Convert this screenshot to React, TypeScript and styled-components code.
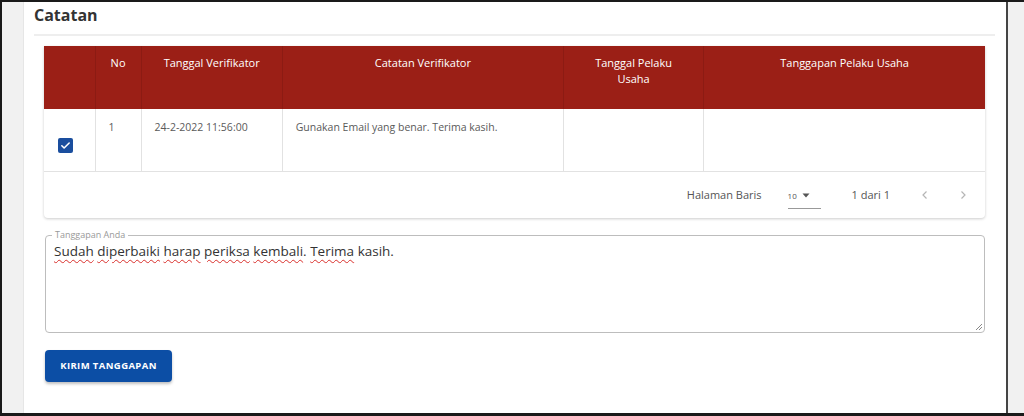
import React from 'react';
import styled, { createGlobalStyle } from 'styled-components';

const GlobalStyle = createGlobalStyle`
  html, body {
    margin: 0;
    padding: 0;
    background: #fff;
  }
  * {
    box-sizing: border-box;
  }
`;

const columns = [
  { key: 'check', label: '', width: 51 },
  { key: 'no', label: 'No', width: 46 },
  { key: 'tglVer', label: 'Tanggal Verifikator', width: 141 },
  { key: 'catVer', label: 'Catatan Verifikator', width: 281 },
  { key: 'tglPel', label: 'Tanggal Pelaku Usaha', width: 140, wrap: true },
  { key: 'tangPel', label: 'Tanggapan Pelaku Usaha', width: 281 },
];

const rows = [
  {
    no: '1',
    tglVer: '24-2-2022 11:56:00',
    catVer: 'Gunakan Email yang benar. Terima kasih.',
    tglPel: '',
    tangPel: '',
  },
];

const replyWords: { text: string; typo: boolean }[] = [
  { text: 'Sudah', typo: true },
  { text: ' ', typo: false },
  { text: 'diperbaiki', typo: true },
  { text: ' ', typo: false },
  { text: 'harap', typo: true },
  { text: ' ', typo: false },
  { text: 'periksa', typo: true },
  { text: ' ', typo: false },
  { text: 'kembali', typo: true },
  { text: '. ', typo: false },
  { text: 'Terima', typo: true },
  { text: ' kasih.', typo: false },
];

const App = () => {
  return (
    <>
      <GlobalStyle />
      <Frame>
        <Gutter />
        <Panel>
          <Title>Catatan</Title>
          <Divider />
          <TableCard>
            <Table>
              <colgroup>
                {columns.map((c) => (
                  <col key={c.key} style={{ width: c.width }} />
                ))}
              </colgroup>
              <thead>
                <tr>
                  {columns.map((c) => (
                    <Th key={c.key}>
                      <HeadLabel $wrap={c.wrap}>{c.label}</HeadLabel>
                    </Th>
                  ))}
                </tr>
              </thead>
              <tbody>
                {rows.map((r) => (
                  <tr key={r.no}>
                    <CheckCell>
                      <CheckBox>
                        <svg width="11" height="11" viewBox="0 0 24 24">
                          <path
                            d="M4 12.5l5 5L20 6.5"
                            fill="none"
                            stroke="#fff"
                            strokeWidth="3.4"
                            strokeLinecap="round"
                            strokeLinejoin="round"
                          />
                        </svg>
                      </CheckBox>
                    </CheckCell>
                    <Td>{r.no}</Td>
                    <Td>{r.tglVer}</Td>
                    <Td>{r.catVer}</Td>
                    <Td>{r.tglPel}</Td>
                    <Td>{r.tangPel}</Td>
                  </tr>
                ))}
              </tbody>
            </Table>
            <Pager>
              <PagerLabel>Halaman Baris</PagerLabel>
              <RowsSelect>
                <span>10</span>
                <svg width="10" height="10" viewBox="0 0 10 10">
                  <path d="M1.5 3.5h7L5 7.5z" fill="#555" />
                </svg>
              </RowsSelect>
              <PagerLabel>1 dari 1</PagerLabel>
              <PagerArrows>
                <Arrow>
                  <svg width="12" height="12" viewBox="0 0 12 12">
                    <path d="M7.5 2.5L4 6l3.5 3.5" fill="none" stroke="#b5b5b5" strokeWidth="1.2" />
                  </svg>
                </Arrow>
                <Arrow>
                  <svg width="12" height="12" viewBox="0 0 12 12">
                    <path d="M4.5 2.5L8 6 4.5 9.5" fill="none" stroke="#b5b5b5" strokeWidth="1.2" />
                  </svg>
                </Arrow>
              </PagerArrows>
            </Pager>
          </TableCard>

          <ReplyField>
            <Legend>Tanggapan Anda</Legend>
            <ReplyText>
              {replyWords.map((w, i) =>
                w.typo ? <Typo key={i}>{w.text}</Typo> : <span key={i}>{w.text}</span>
              )}
            </ReplyText>
            <Grip>
              <svg width="9" height="9" viewBox="0 0 9 9">
                <path d="M8 2L2 8M8 5L5 8" stroke="#888" strokeWidth="1" />
              </svg>
            </Grip>
          </ReplyField>

          <SubmitButton>KIRIM TANGGAPAN</SubmitButton>
        </Panel>
        <RightGutter />
      </Frame>
    </>
  );
};

export default App;

const Frame = styled.div`
  width: 1024px;
  height: 416px;
  display: flex;
  border-top: 2px solid #1a1a1a;
  border-left: 2px solid #1a1a1a;
  border-bottom: 3px solid #1a1a1a;
  font-family: 'Open Sans', 'Liberation Sans', sans-serif;
  overflow: hidden;
`;

const Gutter = styled.div`
  width: 22px;
  flex-shrink: 0;
  background: #f1f1f1;
  border-right: 1px solid #e6e6e6;
`;

const RightGutter = styled.div`
  width: 18px;
  flex-shrink: 0;
  background: #f1f1f1;
  border-left: 2px solid #444;
`;

const Panel = styled.div`
  flex: 1;
  background: #fff;
  padding: 3px 11px 0 10px;
  display: flex;
  flex-direction: column;
`;

const Title = styled.h2`
  margin: 0;
  font-size: 16px;
  line-height: 20px;
  font-weight: 700;
  color: #333;
`;

const Divider = styled.div`
  height: 2px;
  background: #eeeeee;
  margin-top: 9px;
`;

const TableCard = styled.div`
  margin: 10px 10px 0 10px;
  border-radius: 0 0 4px 4px;
  box-shadow: 0 1px 3px rgba(0, 0, 0, 0.2);
  background: #fff;
`;

const Table = styled.table`
  width: 100%;
  border-collapse: collapse;
  table-layout: fixed;
`;

const Th = styled.th`
  background: #9b1f16;
  color: #fff;
  font-size: 11px;
  font-weight: 400;
  line-height: 16px;
  height: 63px;
  padding: 9px 4px 0;
  vertical-align: top;
  text-align: center;
  border-left: 1px solid #8c1b13;

  &:first-child {
    border-left: none;
  }
`;

const HeadLabel = styled.span<{ $wrap?: boolean }>`
  display: inline-block;
  max-width: ${(p) => (p.$wrap ? '96px' : 'none')};
`;

const Td = styled.td`
  height: 62px;
  padding: 10px 13px 0;
  vertical-align: top;
  font-size: 10.5px;
  line-height: 16px;
  color: #5a5a5a;
  border-left: 1px solid #e2e2e2;
  border-bottom: 1px solid #e2e2e2;
`;

const CheckCell = styled.td`
  height: 62px;
  padding: 29px 0 0 14px;
  vertical-align: top;
  border-bottom: 1px solid #e2e2e2;
`;

const CheckBox = styled.span`
  display: flex;
  align-items: center;
  justify-content: center;
  width: 15px;
  height: 15px;
  border-radius: 2px;
  background: #1a4e9e;
`;

const Pager = styled.div`
  height: 46px;
  display: flex;
  align-items: center;
  justify-content: flex-end;
  padding-right: 16px;
`;

const PagerLabel = styled.span`
  font-size: 11px;
  color: #555;
`;

const RowsSelect = styled.div`
  width: 33px;
  height: 22px;
  margin: 6px 31px 0 26px;
  display: flex;
  align-items: center;
  justify-content: space-between;
  padding: 0 10px 4px 0;
  border-bottom: 1px solid #999;
  font-size: 8px;
  color: #555;
`;

const PagerArrows = styled.div`
  display: flex;
  gap: 26px;
  margin-left: 29px;
`;

const Arrow = styled.span`
  display: flex;
  width: 12px;
  height: 12px;
`;

const ReplyField = styled.div`
  position: relative;
  margin: 17px 10px 0 11px;
  height: 98px;
  border: 1px solid #bdbdbd;
  border-radius: 4px;
  padding: 5px 8px;
`;

const Legend = styled.span`
  position: absolute;
  top: -7px;
  left: 6px;
  padding: 0 3px;
  background: #fff;
  font-size: 9px;
  line-height: 12px;
  color: #999;
`;

const ReplyText = styled.div`
  font-size: 13.5px;
  line-height: 20px;
  color: #333;
`;

const Typo = styled.span`
  text-decoration: underline wavy #d9302c;
  text-decoration-thickness: 1px;
  text-underline-offset: 3px;
`;

const Grip = styled.span`
  position: absolute;
  right: 1px;
  bottom: 1px;
  width: 9px;
  height: 9px;
  display: flex;
`;

const SubmitButton = styled.button`
  align-self: flex-start;
  margin: 17px 0 0 11px;
  width: 127px;
  height: 32px;
  border: none;
  border-radius: 4px;
  background: #0c4ea5;
  color: #fff;
  font-family: 'Open Sans', 'Liberation Sans', sans-serif;
  font-size: 9.5px;
  font-weight: 700;
  letter-spacing: 0.4px;
  box-shadow: 0 2px 3px rgba(0, 0, 0, 0.25);
  cursor: pointer;
`;
